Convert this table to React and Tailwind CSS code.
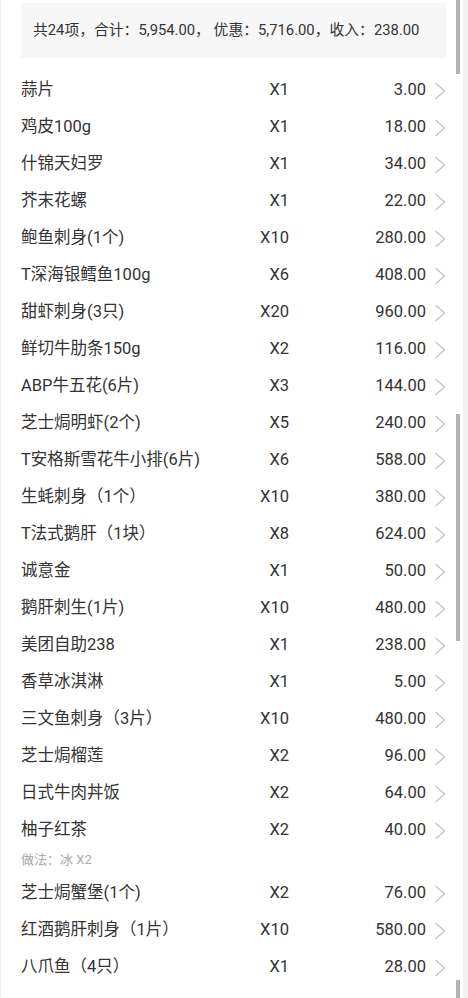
import React from 'react';

// Order detail list: a summary strip over dish rows (name / count / amount / chevron).
const items = [
  { name: '蒜片', qty: 'X1', price: '3.00' },
  { name: '鸡皮100g', qty: 'X1', price: '18.00' },
  { name: '什锦天妇罗', qty: 'X1', price: '34.00' },
  { name: '芥末花螺', qty: 'X1', price: '22.00' },
  { name: '鲍鱼刺身(1个)', qty: 'X10', price: '280.00' },
  { name: 'T深海银鳕鱼100g', qty: 'X6', price: '408.00' },
  { name: '甜虾刺身(3只)', qty: 'X20', price: '960.00' },
  { name: '鲜切牛肋条150g', qty: 'X2', price: '116.00' },
  { name: 'ABP牛五花(6片)', qty: 'X3', price: '144.00' },
  { name: '芝士焗明虾(2个)', qty: 'X5', price: '240.00' },
  { name: 'T安格斯雪花牛小排(6片)', qty: 'X6', price: '588.00' },
  { name: '生蚝刺身（1个）', qty: 'X10', price: '380.00' },
  { name: 'T法式鹅肝（1块）', qty: 'X8', price: '624.00' },
  { name: '诚意金', qty: 'X1', price: '50.00' },
  { name: '鹅肝刺生(1片)', qty: 'X10', price: '480.00' },
  { name: '美团自助238', qty: 'X1', price: '238.00' },
  { name: '香草冰淇淋', qty: 'X1', price: '5.00' },
  { name: '三文鱼刺身（3片）', qty: 'X10', price: '480.00' },
  { name: '芝士焗榴莲', qty: 'X2', price: '96.00' },
  { name: '日式牛肉丼饭', qty: 'X2', price: '64.00' },
  { name: '柚子红茶', qty: 'X2', price: '40.00', note: '做法：冰 X2' },
  { name: '芝士焗蟹堡(1个)', qty: 'X2', price: '76.00' },
  { name: '红酒鹅肝刺身（1片）', qty: 'X10', price: '580.00' },
  { name: '八爪鱼（4只）', qty: 'X1', price: '28.00' },
];

function Chevron() {
  return (
    <svg width="12" height="18" viewBox="0 0 12 18" className="shrink-0">
      <polyline points="1.5,1 10.5,9 1.5,17" fill="none" stroke="#c4c4c4" strokeWidth="1.3" />
    </svg>
  );
}

function Row({ item }) {
  return (
    <>
      <div className="flex h-[37px] items-center pl-[20px] pr-[17px] text-[16.5px] text-[#333]">
        <span className="w-[230px] truncate">{item.name}</span>
        <span className="w-[38px] text-right">{item.qty}</span>
        <span className="flex-1 text-right">{item.price}</span>
        <span className="ml-[8px] flex">
          <Chevron />
        </span>
      </div>
      {item.note && (
        <div className="h-[26px] pl-[20px] pt-[3px] text-[13px] leading-[16px] text-[#aaa]">{item.note}</div>
      )}
    </>
  );
}

export default function App() {
  return (
    <div
      className="relative flex h-[998px] w-[468px] overflow-hidden bg-[#f2f2f2]"
      style={{ fontFamily: 'Roboto, "Noto Sans CJK SC", sans-serif' }}
    >
      <div className="ml-[1px] w-[462px] bg-white pt-[3px]">
        <div className="ml-[20px] mr-[17px] flex h-[55px] items-center bg-[#f7f7f7] pl-[12px] text-[14.8px] text-[#333]">
          共24项，合计：5,954.00， 优惠：5,716.00，收入：238.00
        </div>
        <div className="mt-[14px]">
          {items.map((item) => (
            <Row key={item.name} item={item} />
          ))}
        </div>
      </div>

      {/* scroll indicators */}
      <div className="absolute left-[456px] top-0 h-[74px] w-[4px] bg-[#b3b3b3]" />
      <div className="absolute left-[456px] top-[414px] h-[227px] w-[4px] bg-[#b3b3b3]" />
      <div className="absolute left-[456px] top-[980px] h-[18px] w-[4px] bg-[#b3b3b3]" />
    </div>
  );
}
